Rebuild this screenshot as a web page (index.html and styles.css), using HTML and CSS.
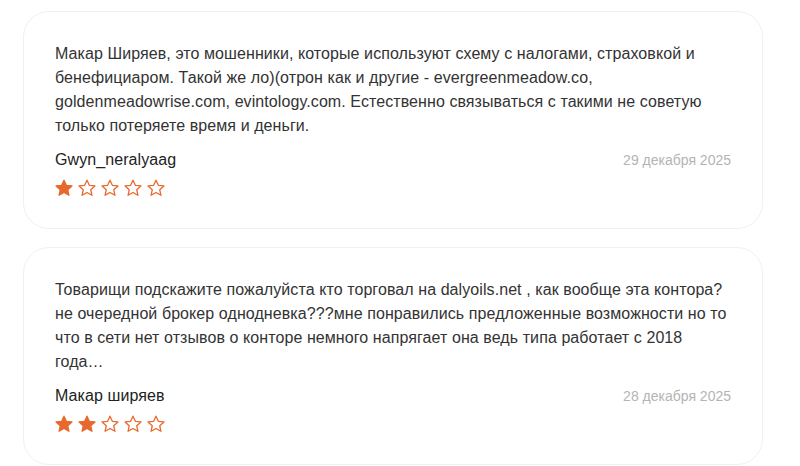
FILE: index.html
```html
<!DOCTYPE html>
<html lang="ru">
<head>
<meta charset="utf-8">
<link rel="stylesheet" href="styles.css">
</head>
<body>
<svg width="0" height="0" class="defs">
  <defs>
    <path id="star" d="M9 1.2l2.35 5.15 5.6.6-4.2 3.8 1.2 5.55L9 13.45 4.05 16.3l1.2-5.55-4.2-3.8 5.6-.6z"/>
  </defs>
</svg>
<div class="reviews">
  <div class="card">
    <p class="text">Макар Ширяев, это мошенники, которые используют схему с налогами, страховкой и бенефициаром. Такой же ло)(отрон как и другие - evergreenmeadow.co, goldenmeadowrise.com, evintology.com. Естественно связываться с такими не советую только потеряете время и деньги.</p>
    <div class="meta">
      <span class="author">Gwyn_neralyaag</span>
      <span class="date">29 декабря 2025</span>
    </div>
    <div class="stars">
      <svg class="star full" viewBox="0 0 18 18"><use href="#star"/></svg>
      <svg class="star" viewBox="0 0 18 18"><use href="#star"/></svg>
      <svg class="star" viewBox="0 0 18 18"><use href="#star"/></svg>
      <svg class="star" viewBox="0 0 18 18"><use href="#star"/></svg>
      <svg class="star" viewBox="0 0 18 18"><use href="#star"/></svg>
    </div>
  </div>
  <div class="card">
    <p class="text">Товарищи подскажите пожалуйста кто торговал на dalyoils.net , как вообще эта контора? не очередной брокер однодневка???мне понравились предложенные возможности но то что в сети нет отзывов о конторе немного напрягает она ведь типа работает с 2018 года…</p>
    <div class="meta">
      <span class="author">Макар ширяев</span>
      <span class="date">28 декабря 2025</span>
    </div>
    <div class="stars">
      <svg class="star full" viewBox="0 0 18 18"><use href="#star"/></svg>
      <svg class="star full" viewBox="0 0 18 18"><use href="#star"/></svg>
      <svg class="star" viewBox="0 0 18 18"><use href="#star"/></svg>
      <svg class="star" viewBox="0 0 18 18"><use href="#star"/></svg>
      <svg class="star" viewBox="0 0 18 18"><use href="#star"/></svg>
    </div>
  </div>
</div>
</body>
</html>
```
FILE: styles.css
```css
html, body {
  margin: 0;
  padding: 0;
  background: #ffffff;
}
body {
  font-family: "Liberation Sans", Arial, sans-serif;
  color: #333333;
}
.defs {
  position: absolute;
  width: 0;
  height: 0;
}
.reviews {
  display: flex;
  flex-direction: column;
  gap: 18px;
  padding: 11px 37px 0 23px;
}
.card {
  border: 1px solid #f0f0f0;
  border-radius: 26px;
  padding: 30px 31px 31px 31px;
  background: #fff;
}
.text {
  margin: 0;
  font-size: 16px;
  line-height: 24px;
  letter-spacing: 0.08px;
  color: #333;
}
.meta {
  display: flex;
  justify-content: space-between;
  align-items: baseline;
  margin-top: 12px;
  line-height: 20px;
}
.author {
  font-size: 16px;
  color: #222;
  letter-spacing: 0.08px;
}
.date {
  font-size: 14px;
  color: #b4b4b4;
}
.stars {
  display: flex;
  gap: 5px;
  margin-top: 9px;
}
.star {
  width: 18px;
  height: 18px;
  fill: #fff;
  stroke: #e8692e;
  stroke-width: 1.3;
  stroke-linejoin: round;
}
.star.full {
  fill: #e8692e;
}
```
